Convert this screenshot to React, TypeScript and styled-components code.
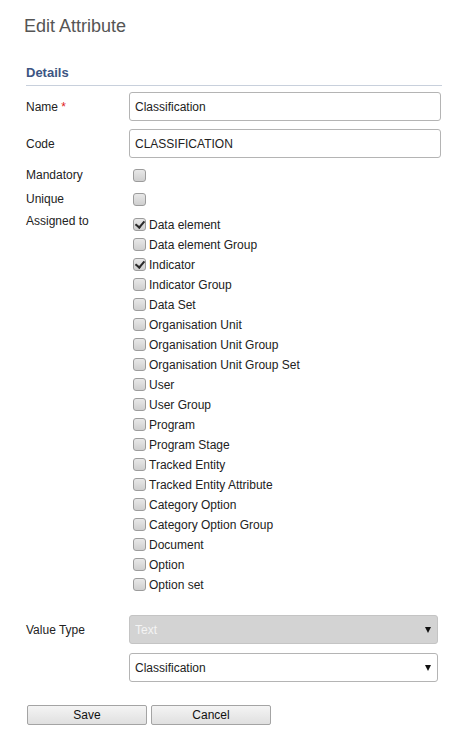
import React from "react";
import styled, { createGlobalStyle } from "styled-components";

const GlobalStyle = createGlobalStyle`
  html, body { margin: 0; padding: 0; background: #ffffff; }
  body {
    font-family: "Liberation Sans", Arial, sans-serif;
    font-size: 12px;
    color: #222;
  }
  * { box-sizing: border-box; }
`;

const Page = styled.div`
  padding: 15px 0 30px 26px;
  width: 442px;
`;

const Title = styled.h2`
  margin: 0 0 0 -2px;
  font-size: 18px;
  line-height: 22px;
  font-weight: normal;
  color: #555555;
`;

const SectionHeader = styled.div`
  margin-top: 28px;
  font-size: 13px;
  line-height: 16px;
  font-weight: bold;
  color: #3c5583;
  padding-bottom: 4px;
  border-bottom: 1px solid #c8d0dc;
`;

const Row = styled.div<{ $mt: number; $align?: string }>`
  display: grid;
  grid-template-columns: 103px 312px;
  align-items: ${(p) => p.$align || "center"};
  margin-top: ${(p) => p.$mt}px;
`;

const Label = styled.label`
  font-size: 12px;
  line-height: 14px;
  color: #222;
`;

const Required = styled.span`
  color: #e02020;
`;

const TextInput = styled.input`
  height: 29px;
  width: 312px;
  border: 1px solid #b4b4b4;
  border-radius: 3px;
  padding: 0 5px;
  font-family: "Liberation Sans", Arial, sans-serif;
  font-size: 12px;
  color: #222;
  background: #fff;
  outline: none;
`;

const Box = styled.input`
  appearance: none;
  -webkit-appearance: none;
  margin: 0 0 0 4px;
  width: 13px;
  height: 13px;
  border: 1px solid #9c9c9c;
  border-radius: 3px;
  background: linear-gradient(#e8e8e8, #cfcfcf);
  position: relative;
  flex: none;
  &:checked::after {
    content: "";
    position: absolute;
    left: 3px;
    top: 0px;
    width: 4px;
    height: 7px;
    border-right: 2px solid #2a2a2a;
    border-bottom: 2px solid #2a2a2a;
    transform: rotate(40deg);
  }
`;

const CheckCell = styled.div`
  display: flex;
  align-items: center;
  height: 13px;
`;

const CheckList = styled.div`
  display: flex;
  flex-direction: column;
  gap: 7px;
  padding-top: 4px;
`;

const CheckItem = styled.label`
  display: flex;
  align-items: center;
  height: 13px;
  font-size: 12px;
  color: #222;
`;

const CheckText = styled.span`
  margin-left: 3px;
  line-height: 14px;
`;

const SelectWrap = styled.div`
  position: relative;
  width: 309px;
  height: 29px;
`;

const Select = styled.select<{ $disabled?: boolean }>`
  appearance: none;
  -webkit-appearance: none;
  width: 309px;
  height: 29px;
  border: 1px solid ${(p) => (p.$disabled ? "#c4c4c4" : "#b4b4b4")};
  border-radius: 3px;
  padding: 0 5px;
  font-family: "Liberation Sans", Arial, sans-serif;
  font-size: 12px;
  color: ${(p) => (p.$disabled ? "#f4f4f4" : "#222")};
  background: ${(p) => (p.$disabled ? "#d3d3d3" : "#ffffff")};
  opacity: 1;
  outline: none;
`;

const Arrow = styled.span`
  position: absolute;
  right: 7px;
  top: 12px;
  width: 0;
  height: 0;
  border-left: 3px solid transparent;
  border-right: 3px solid transparent;
  border-top: 6px solid #111;
  pointer-events: none;
`;

const Buttons = styled.div`
  display: flex;
  gap: 4px;
  margin: 23px 0 0 1px;
`;

const Button = styled.button`
  width: 120px;
  height: 20px;
  padding: 0;
  border: 1px solid #a4a4a4;
  border-radius: 2px;
  background: linear-gradient(#f4f4f4, #e0e0e0);
  font-family: "Liberation Sans", Arial, sans-serif;
  font-size: 12px;
  color: #111;
`;

const assigned: [string, boolean][] = [
  ["Data element", true],
  ["Data element Group", false],
  ["Indicator", true],
  ["Indicator Group", false],
  ["Data Set", false],
  ["Organisation Unit", false],
  ["Organisation Unit Group", false],
  ["Organisation Unit Group Set", false],
  ["User", false],
  ["User Group", false],
  ["Program", false],
  ["Program Stage", false],
  ["Tracked Entity", false],
  ["Tracked Entity Attribute", false],
  ["Category Option", false],
  ["Category Option Group", false],
  ["Document", false],
  ["Option", false],
  ["Option set", false],
];

export default function App() {
  return (
    <>
      <GlobalStyle />
      <Page>
        <Title>Edit Attribute</Title>
        <SectionHeader>Details</SectionHeader>
        <Row $mt={6}>
          <Label>
            Name <Required>*</Required>
          </Label>
          <TextInput defaultValue="Classification" />
        </Row>
        <Row $mt={8}>
          <Label>Code</Label>
          <TextInput defaultValue="CLASSIFICATION" />
        </Row>
        <Row $mt={10}>
          <Label>Mandatory</Label>
          <CheckCell>
            <Box type="checkbox" />
          </CheckCell>
        </Row>
        <Row $mt={10}>
          <Label>Unique</Label>
          <CheckCell>
            <Box type="checkbox" />
          </CheckCell>
        </Row>
        <Row $mt={8} $align="start">
          <Label>Assigned to</Label>
          <CheckList>
            {assigned.map(([name, checked]) => (
              <CheckItem key={name}>
                <Box type="checkbox" defaultChecked={checked} />
                <CheckText>{name}</CheckText>
              </CheckItem>
            ))}
          </CheckList>
        </Row>
        <Row $mt={24}>
          <Label>Value Type</Label>
          <SelectWrap>
            <Select $disabled disabled defaultValue="text">
              <option value="text">Text</option>
            </Select>
            <Arrow />
          </SelectWrap>
        </Row>
        <Row $mt={9}>
          <span />
          <SelectWrap>
            <Select defaultValue="classification">
              <option value="classification">Classification</option>
            </Select>
            <Arrow />
          </SelectWrap>
        </Row>
        <Buttons>
          <Button>Save</Button>
          <Button>Cancel</Button>
        </Buttons>
      </Page>
    </>
  );
}
